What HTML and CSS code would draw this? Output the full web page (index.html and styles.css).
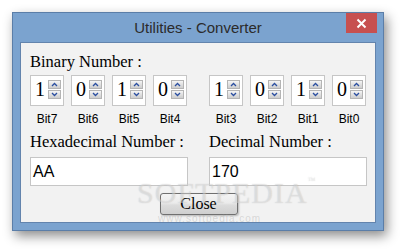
FILE: index.html
```html
<!DOCTYPE html>
<html>
<head>
<meta charset="utf-8">
<link rel="stylesheet" href="styles.css">
</head>
<body>
<div class="window">
  <div class="titlebar">
    <span class="title">Utilities - Converter</span>
    <div class="close-btn">
      <svg width="11" height="11" viewBox="0 0 11 11"><path d="M1.5 1.5 L9.5 9.5 M9.5 1.5 L1.5 9.5" stroke="#fff" stroke-width="2" fill="none"/></svg>
    </div>
  </div>
  <div class="client">
    <div class="grid">
      <div class="heading span2">Binary Number :</div>

      <div class="bits">
        <div class="bit"><div class="spin"><span class="digit">1</span><div class="spinner"><div class="sbtn"><svg width="7" height="5" viewBox="0 0 7 5"><path d="M1 4 L3.5 1.5 L6 4" stroke="#2a4ea0" stroke-width="1.3" fill="none"/></svg></div><div class="sbtn"><svg width="7" height="5" viewBox="0 0 7 5"><path d="M1 1 L3.5 3.5 L6 1" stroke="#2a4ea0" stroke-width="1.3" fill="none"/></svg></div></div></div><span class="blabel">Bit7</span></div>
        <div class="bit"><div class="spin"><span class="digit">0</span><div class="spinner"><div class="sbtn"><svg width="7" height="5" viewBox="0 0 7 5"><path d="M1 4 L3.5 1.5 L6 4" stroke="#2a4ea0" stroke-width="1.3" fill="none"/></svg></div><div class="sbtn"><svg width="7" height="5" viewBox="0 0 7 5"><path d="M1 1 L3.5 3.5 L6 1" stroke="#2a4ea0" stroke-width="1.3" fill="none"/></svg></div></div></div><span class="blabel">Bit6</span></div>
        <div class="bit"><div class="spin"><span class="digit">1</span><div class="spinner"><div class="sbtn"><svg width="7" height="5" viewBox="0 0 7 5"><path d="M1 4 L3.5 1.5 L6 4" stroke="#2a4ea0" stroke-width="1.3" fill="none"/></svg></div><div class="sbtn"><svg width="7" height="5" viewBox="0 0 7 5"><path d="M1 1 L3.5 3.5 L6 1" stroke="#2a4ea0" stroke-width="1.3" fill="none"/></svg></div></div></div><span class="blabel">Bit5</span></div>
        <div class="bit"><div class="spin"><span class="digit">0</span><div class="spinner"><div class="sbtn"><svg width="7" height="5" viewBox="0 0 7 5"><path d="M1 4 L3.5 1.5 L6 4" stroke="#2a4ea0" stroke-width="1.3" fill="none"/></svg></div><div class="sbtn"><svg width="7" height="5" viewBox="0 0 7 5"><path d="M1 1 L3.5 3.5 L6 1" stroke="#2a4ea0" stroke-width="1.3" fill="none"/></svg></div></div></div><span class="blabel">Bit4</span></div>
      </div>

      <div class="bits">
        <div class="bit"><div class="spin"><span class="digit">1</span><div class="spinner"><div class="sbtn"><svg width="7" height="5" viewBox="0 0 7 5"><path d="M1 4 L3.5 1.5 L6 4" stroke="#2a4ea0" stroke-width="1.3" fill="none"/></svg></div><div class="sbtn"><svg width="7" height="5" viewBox="0 0 7 5"><path d="M1 1 L3.5 3.5 L6 1" stroke="#2a4ea0" stroke-width="1.3" fill="none"/></svg></div></div></div><span class="blabel">Bit3</span></div>
        <div class="bit"><div class="spin"><span class="digit">0</span><div class="spinner"><div class="sbtn"><svg width="7" height="5" viewBox="0 0 7 5"><path d="M1 4 L3.5 1.5 L6 4" stroke="#2a4ea0" stroke-width="1.3" fill="none"/></svg></div><div class="sbtn"><svg width="7" height="5" viewBox="0 0 7 5"><path d="M1 1 L3.5 3.5 L6 1" stroke="#2a4ea0" stroke-width="1.3" fill="none"/></svg></div></div></div><span class="blabel">Bit2</span></div>
        <div class="bit"><div class="spin"><span class="digit">1</span><div class="spinner"><div class="sbtn"><svg width="7" height="5" viewBox="0 0 7 5"><path d="M1 4 L3.5 1.5 L6 4" stroke="#2a4ea0" stroke-width="1.3" fill="none"/></svg></div><div class="sbtn"><svg width="7" height="5" viewBox="0 0 7 5"><path d="M1 1 L3.5 3.5 L6 1" stroke="#2a4ea0" stroke-width="1.3" fill="none"/></svg></div></div></div><span class="blabel">Bit1</span></div>
        <div class="bit"><div class="spin"><span class="digit">0</span><div class="spinner"><div class="sbtn"><svg width="7" height="5" viewBox="0 0 7 5"><path d="M1 4 L3.5 1.5 L6 4" stroke="#2a4ea0" stroke-width="1.3" fill="none"/></svg></div><div class="sbtn"><svg width="7" height="5" viewBox="0 0 7 5"><path d="M1 1 L3.5 3.5 L6 1" stroke="#2a4ea0" stroke-width="1.3" fill="none"/></svg></div></div></div><span class="blabel">Bit0</span></div>
      </div>

      <div class="field">
        <div class="heading">Hexadecimal Number :</div>
        <div class="textbox">AA</div>
      </div>
      <div class="field">
        <div class="heading">Decimal Number :</div>
        <div class="textbox">170</div>
      </div>

      <div class="actions span2">
        <button class="btn">Close</button>
      </div>
    </div>
    <div class="watermark">SOFTPEDIA<span class="tm">™</span></div>
    <div class="watermark-url">www.softpedia.com</div>
  </div>
</div>
</body>
</html>
```
FILE: styles.css
```css
html, body {
  margin: 0;
  padding: 0;
  background: #ffffff;
  width: 404px;
  height: 251px;
  overflow: hidden;
}

body {
  padding: 12px 0 0 12px;
  box-sizing: border-box;
}

.window {
  position: relative;
  width: 372px;
  height: 219px;
  box-sizing: border-box;
  background: #7ba3cf;
  border: 1px solid #5b7ea8;
  box-shadow: 3px 5px 11px rgba(0, 0, 0, 0.45);
  display: flex;
  flex-direction: column;
}

.titlebar {
  height: 29px;
  flex: none;
  display: flex;
  align-items: center;
  justify-content: center;
}

.title {
  font-family: "Liberation Sans", Arial, sans-serif;
  font-size: 15px;
  color: #2b2b2b;
}

.close-btn {
  position: absolute;
  top: 0;
  right: 6px;
  width: 31px;
  height: 20px;
  background: #c75050;
  display: flex;
  align-items: center;
  justify-content: center;
}

.client {
  position: relative;
  flex: none;
  height: 181px;
  margin: 0 7px;
  box-sizing: border-box;
  background: #f2f2f2;
  border: 1px solid #6384ad;
  padding: 9px 8px 0 9px;
}

.grid {
  display: grid;
  grid-template-columns: 158px 158px;
  column-gap: 21px;
}

.span2 {
  grid-column: 1 / span 2;
}

.heading {
  font-family: "Liberation Serif", "Times New Roman", serif;
  font-size: 16.5px;
  line-height: 19px;
  color: #000;
}

.bits {
  display: flex;
  gap: 7px;
  margin-top: 4px;
}

.bit {
  display: flex;
  flex-direction: column;
  align-items: center;
  width: 34px;
}

.spin {
  width: 34px;
  height: 31px;
  box-sizing: border-box;
  background: #fff;
  border: 1px solid #c6c6c6;
  display: flex;
  align-items: flex-start;
  padding: 3px 2px 0 4px;
}

.digit {
  font-family: "Liberation Serif", "Times New Roman", serif;
  font-size: 20px;
  line-height: 20px;
  color: #000;
}

.spinner {
  margin-left: auto;
  margin-top: 1px;
  width: 13px;
  display: flex;
  flex-direction: column;
  gap: 1px;
}

.sbtn {
  height: 9px;
  box-sizing: border-box;
  border: 1px solid #b4b4b4;
  background: linear-gradient(#f5f5f5, #dedede 55%, #cdcdcd);
  display: flex;
  align-items: center;
  justify-content: center;
}

.blabel {
  margin-top: 6px;
  font-family: "Liberation Sans", Arial, sans-serif;
  font-size: 12px;
  line-height: 14px;
  color: #000;
}

.field {
  margin-top: 6px;
  display: flex;
  flex-direction: column;
}

.textbox {
  margin-top: 6px;
  height: 29px;
  box-sizing: border-box;
  background: #fff;
  border: 1px solid #c6c6c6;
  padding-left: 2px;
  font-family: "Liberation Sans", Arial, sans-serif;
  font-size: 16px;
  line-height: 27px;
  color: #000;
}

.actions {
  display: flex;
  justify-content: center;
  margin-top: 7px;
}

.btn {
  width: 78px;
  height: 22px;
  margin: 0;
  padding: 0;
  box-sizing: border-box;
  border: 1px solid #707070;
  border-radius: 3px;
  background: linear-gradient(#f4f4f4, #ebebeb 45%, #dcdcdc 55%, #cfcfcf);
  font-family: "Liberation Serif", "Times New Roman", serif;
  font-size: 16px;
  line-height: 20px;
  color: #000;
  box-shadow: 1px 1px 2px rgba(0, 0, 0, 0.25);
}

.watermark {
  position: absolute;
  left: 116px;
  top: 133px;
  font-family: "Liberation Serif", "Times New Roman", serif;
  font-size: 30px;
  letter-spacing: 1px;
  color: rgba(255, 255, 255, 0.35);
  text-shadow: 0 0 1px rgba(120, 120, 120, 0.35);
  pointer-events: none;
}

.tm {
  font-size: 8px;
  vertical-align: top;
}

.watermark-url {
  position: absolute;
  left: 137px;
  top: 170px;
  font-family: "Liberation Sans", Arial, sans-serif;
  font-size: 10px;
  letter-spacing: 1px;
  color: rgba(150, 150, 150, 0.3);
  pointer-events: none;
}
```
